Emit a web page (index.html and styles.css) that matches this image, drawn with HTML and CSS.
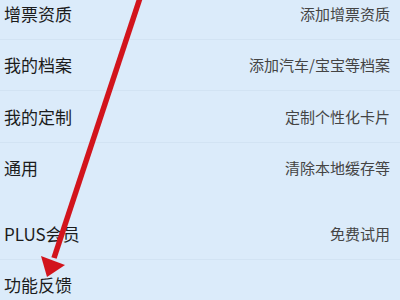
FILE: index.html
```html
<!DOCTYPE html>
<html lang="zh">
<head>
<meta charset="utf-8">
<link rel="stylesheet" href="styles.css">
</head>
<body>
<div class="page">
  <div class="group">
    <div class="row"><span class="label">增票资质</span><span class="hint">添加增票资质</span></div>
    <div class="row"><span class="label">我的档案</span><span class="hint">添加汽车/宝宝等档案</span></div>
    <div class="row"><span class="label">我的定制</span><span class="hint">定制个性化卡片</span></div>
    <div class="row last"><span class="label">通用</span><span class="hint">清除本地缓存等</span></div>
  </div>
  <div class="group">
    <div class="row"><span class="label">PLUS会员</span><span class="hint">免费试用</span></div>
    <div class="row last"><span class="label">功能反馈</span><span class="hint"></span></div>
  </div>
  <svg class="arrow" width="400" height="300" viewBox="0 0 400 300">
    <line x1="140" y1="-2" x2="54" y2="258" stroke="#d2141c" stroke-width="5.5"/>
    <polygon points="41,256 65,265 47,277" fill="#d2141c"/>
  </svg>
</div>
</body>
</html>
```
FILE: styles.css
```css
html, body {
  margin: 0;
  padding: 0;
  background: #dbebfa;
}
.page {
  position: relative;
  width: 400px;
  height: 300px;
  overflow: hidden;
  font-family: "Noto Sans CJK SC", "Noto Sans", sans-serif;
  line-height: 1;
}
.group {
  display: flex;
  flex-direction: column;
}
.group:first-child {
  margin-top: -12px;
}
.group + .group {
  margin-top: 15px;
}
.row {
  flex: none;
  height: 50.5px;
  display: flex;
  align-items: center;
  justify-content: space-between;
  padding: 0 10px 0 4px;
  border-bottom: 1px solid #d2e3f3;
}
.row.last {
  border-bottom: none;
}
.label {
  font-size: 17px;
  color: #1c1c1c;
}
.hint {
  font-size: 15px;
  color: #444;
}
.arrow {
  position: absolute;
  left: 0;
  top: 0;
}
```
